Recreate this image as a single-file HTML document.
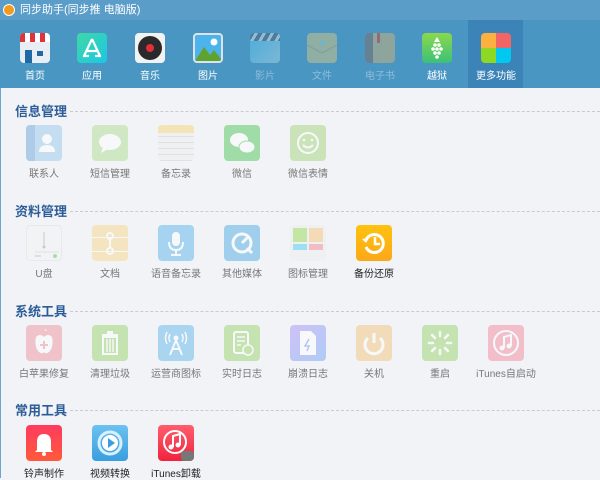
<!DOCTYPE html>
<html><head><meta charset="utf-8"><style>
*{margin:0;padding:0;box-sizing:border-box}
body{width:600px;height:478px;overflow:hidden;background:#f1f3f7;font-family:"Liberation Sans","Noto Sans CJK SC",sans-serif;position:relative}
.a{position:absolute}
#title{left:0;top:0;width:600px;height:20px;background:#5a9dc9;color:#fff;font-size:11px;line-height:20px;padding-left:20px}
#tb{left:0;top:20px;width:600px;height:68px;background:#4996c3}
#sel{left:468px;top:20px;width:55px;height:68px;background:#3c84b7}
.ti{position:absolute;top:33px;width:30px;height:30px;border-radius:4px;overflow:hidden}
.tl{position:absolute;top:67px;width:60px;text-align:center;font-size:10px;color:#fff}
.dim{color:#8fbcdc}
#lb{left:0;top:88px;width:1px;height:390px;background:#6aa6d3}
.h{position:absolute;left:15px;font-size:13px;font-weight:bold;color:#2d5d98}
.dl{position:absolute;left:70px;width:530px;border-top:1px dashed #c8ccd2}
.ic{position:absolute;width:36px;height:36px;border-radius:4px;overflow:hidden}
.f{opacity:.45}
.lab{position:absolute;width:70px;text-align:center;font-size:10px;color:#777}
.lab.on{color:#222}
</style></head><body>
<div id="title" class="a">同步助手(同步推 电脑版)</div>
<div class="a" style="left:3px;top:4px;width:12px;height:12px;border-radius:6px;background:#f39a1e;border:1px solid #fff"></div>
<div id="tb" class="a"></div>
<div id="sel" class="a"></div>

<div class="ti" style="left:20px;background:#e8eef4"><div class="a" style="left:0;top:0;width:30px;height:9px;background:repeating-linear-gradient(90deg,#e0323c 0 5px,#fff 5px 10px)"></div><div class="a" style="left:5px;top:17px;width:7px;height:13px;background:#1f6aa5"></div><div class="a" style="left:17px;top:18px;width:6px;height:5px;background:#1f6aa5"></div></div>
<div class="ti" style="left:77px;background:linear-gradient(135deg,#3fd8a6,#1cc6e6)"><svg width="30" height="30"><path d="M15 6L7 23M15 6L23 23M9 18H21M6 23H12M18 23H24" stroke="#fff" stroke-width="2.2" fill="none"/></svg></div>
<div class="ti" style="left:135px;background:#f2f2f2"><div class="a" style="left:3px;top:3px;width:24px;height:24px;border-radius:12px;background:#2a2a2a"></div><div class="a" style="left:11px;top:11px;width:8px;height:8px;border-radius:4px;background:#e0303c"></div></div>
<div class="ti" style="left:193px;background:#eef2f5;border:2px solid #dde3e8"><div class="a" style="left:0;top:0;width:26px;height:26px;background:#4cb4ea"></div><svg class="a" style="left:0;top:0" width="26" height="26"><path d="M0 26L9 12L15 20L19 15L26 24V26Z" fill="#5fa22e"/><circle cx="19" cy="7" r="3.5" fill="#fff"/></svg></div>
<div class="ti" style="left:250px;background:linear-gradient(135deg,#4fc0ea,#a6d2e6);opacity:.55"><div class="a" style="left:0;top:0;width:30px;height:8px;background:repeating-linear-gradient(120deg,#567 0 4px,#cde 4px 7px)"></div></div>
<div class="ti" style="left:307px;background:#a7b69a;opacity:.75"><svg width="30" height="30"><path d="M0 12L15 20L30 12" stroke="#94a38a" fill="none"/><circle cx="15" cy="10" r="2" fill="#6ec1e4"/></svg></div>
<div class="ti" style="left:365px;background:#a4a98f;opacity:.75"><div class="a" style="left:0;top:0;width:8px;height:30px;background:#6f7b84"></div><div class="a" style="left:12px;top:0;width:3px;height:10px;background:#b05a5a"></div></div>
<div class="ti" style="left:422px;background:linear-gradient(#8ad84c,#3cc07a)"><svg width="30" height="30"><g fill="#fff"><circle cx="15" cy="16" r="1.8"/><circle cx="11" cy="16" r="1.8"/><circle cx="19" cy="16" r="1.8"/><circle cx="13" cy="20" r="1.8"/><circle cx="17" cy="20" r="1.8"/><circle cx="13" cy="12" r="1.8"/><circle cx="17" cy="12" r="1.8"/><circle cx="15" cy="24" r="1.8"/><path d="M15 4L12 9H18Z"/></g></svg></div>
<div class="ti" style="left:481px"><div class="a" style="left:0;top:0;width:15px;height:15px;background:#fbb040"></div><div class="a" style="left:15px;top:0;width:15px;height:15px;background:#f06565"></div><div class="a" style="left:0;top:15px;width:15px;height:15px;background:#8ed722"></div><div class="a" style="left:15px;top:15px;width:15px;height:15px;background:#00c8f0"></div></div>
<div class="tl" style="left:5px">首页</div><div class="tl" style="left:62px">应用</div><div class="tl" style="left:120px">音乐</div><div class="tl" style="left:178px">图片</div><div class="tl dim" style="left:235px">影片</div><div class="tl dim" style="left:292px">文件</div><div class="tl dim" style="left:350px">电子书</div><div class="tl" style="left:407px">越狱</div><div class="tl" style="left:466px">更多功能</div>

<div id="lb" class="a"></div>

<div class="h" style="top:101px">信息管理</div><div class="dl" style="top:111px"></div>
<div class="h" style="top:201px">资料管理</div><div class="dl" style="top:211px"></div>
<div class="h" style="top:301px">系统工具</div><div class="dl" style="top:311px"></div>
<div class="h" style="top:400px">常用工具</div><div class="dl" style="top:410px"></div>

<div class="ic f" style="left:26px;top:125px;background:#8ec3ea"><div class="a" style="left:0;top:0;width:9px;height:36px;background:#5e9fd8"></div><svg class="a" width="36" height="36"><circle cx="21" cy="14" r="5" fill="#fff"/><path d="M13 27Q13 20 21 20Q29 20 29 27Z" fill="#fff"/></svg></div>
<div class="ic f" style="left:92px;top:125px;background:#a8dc86"><svg width="36" height="36"><ellipse cx="18" cy="17" rx="11" ry="8" fill="#fff"/><path d="M11 22L9 28L16 24Z" fill="#fff"/></svg></div>
<div class="ic f" style="left:158px;top:125px;background:repeating-linear-gradient(#eee 0 5px,#ccc 5px 6px)"><div class="a" style="left:0;top:0;width:36px;height:8px;background:#f4d466"></div></div>
<div class="ic f" style="left:224px;top:125px;background:#3fc248"><svg width="36" height="36"><ellipse cx="15" cy="15" rx="9" ry="7" fill="#fff"/><ellipse cx="23" cy="22" rx="8" ry="6" fill="#fff" stroke="#3fc248"/></svg></div>
<div class="ic f" style="left:290px;top:125px;background:#9ed16d"><svg width="36" height="36"><circle cx="18" cy="18" r="10" fill="none" stroke="#fff" stroke-width="2"/><path d="M13 20Q18 25 23 20" stroke="#fff" stroke-width="2" fill="none"/><circle cx="14" cy="15" r="1.3" fill="#fff"/><circle cx="22" cy="15" r="1.3" fill="#fff"/></svg></div>
<div class="lab" style="left:9px;top:165px">联系人</div><div class="lab" style="left:75px;top:165px">短信管理</div><div class="lab" style="left:141px;top:165px">备忘录</div><div class="lab" style="left:207px;top:165px">微信</div><div class="lab" style="left:273px;top:165px">微信表情</div>

<div class="ic f" style="left:26px;top:225px;background:#f4f4f4;border:1px solid #ddd"><svg width="34" height="34"><path d="M17 6V20" stroke="#999"/><circle cx="17" cy="21" r="1.5" fill="#999"/><path d="M8 26H32" stroke="#ccc"/><path d="M8 30H14" stroke="#999"/><circle cx="28" cy="30" r="2" fill="#4c4"/></svg></div>
<div class="ic f" style="left:92px;top:225px;background:#f8d27c"><div class="a" style="left:0;top:12px;width:36px;height:1px;background:#fff"></div><div class="a" style="left:0;top:26px;width:36px;height:1px;background:#fff"></div><svg class="a" width="36" height="36"><circle cx="18" cy="11" r="3" fill="none" stroke="#fff" stroke-width="2"/><circle cx="18" cy="26" r="3" fill="none" stroke="#fff" stroke-width="2"/><path d="M18 14V23" stroke="#fff" stroke-width="2"/></svg></div>
<div class="ic f" style="left:158px;top:225px;background:#4cb0e8"><svg width="36" height="36"><rect x="14" y="7" width="8" height="14" rx="4" fill="#fff"/><path d="M11 17Q11 25 18 25Q25 25 25 17M18 25V30M13 30H23" stroke="#fff" stroke-width="2" fill="none"/></svg></div>
<div class="ic f" style="left:224px;top:225px;background:#3da4e0"><svg width="36" height="36"><circle cx="18" cy="18" r="9" fill="none" stroke="#fff" stroke-width="3"/><path d="M18 18L24 12M23 23L28 28" stroke="#fff" stroke-width="3"/></svg></div>
<div class="ic f" style="left:290px;top:225px;background:#eee"><div class="a" style="left:3px;top:3px;width:14px;height:14px;background:#8ed740"></div><div class="a" style="left:19px;top:3px;width:14px;height:14px;background:#f8c06a"></div><div class="a" style="left:3px;top:19px;width:14px;height:6px;background:#3ac8ef"></div><div class="a" style="left:19px;top:19px;width:14px;height:6px;background:#f47a8a"></div></div>
<div class="ic" style="left:356px;top:225px;background:linear-gradient(#ffc20f,#fba818)"><svg width="36" height="36"><path d="M10 15A9 9 0 1 1 10 22" stroke="#fff" stroke-width="3" fill="none"/><path d="M6 14L10 18L13 13Z" fill="#fff"/><path d="M19 12V19H24" stroke="#fff" stroke-width="2.5" fill="none"/></svg></div>
<div class="lab" style="left:9px;top:265px">U盘</div><div class="lab" style="left:75px;top:265px">文档</div><div class="lab" style="left:141px;top:265px">语音备忘录</div><div class="lab" style="left:207px;top:265px">其他媒体</div><div class="lab" style="left:273px;top:265px">图标管理</div><div class="lab on" style="left:339px;top:265px">备份还原</div>

<div class="ic f" style="left:26px;top:325px;background:#f08a95"><svg width="36" height="36"><path d="M18 12Q22 8 26 12Q28 20 24 26Q20 30 18 27Q16 30 12 26Q8 20 10 12Q14 8 18 12Z" fill="#fff"/><path d="M18 5Q20 3 21 6Z" fill="#fff"/><path d="M18 16V24M14 20H22" stroke="#f08a95" stroke-width="2"/></svg></div>
<div class="ic f" style="left:92px;top:325px;background:#8fd05c"><svg width="36" height="36"><rect x="10" y="9" width="16" height="2" fill="#fff"/><rect x="15" y="6" width="6" height="3" fill="#fff"/><rect x="11" y="12" width="14" height="17" fill="none" stroke="#fff" stroke-width="2"/><path d="M15 14V27M18 14V27M21 14V27" stroke="#fff" stroke-width="1.5"/></svg></div>
<div class="ic f" style="left:158px;top:325px;background:#55b2ea"><svg width="36" height="36"><circle cx="18" cy="13" r="2.5" fill="#fff"/><path d="M18 15L12 30M18 15L24 30M14 24H22" stroke="#fff" stroke-width="2"/><path d="M12 9Q10 13 12 17M24 9Q26 13 24 17M9 7Q6 13 9 19M27 7Q30 13 27 19" stroke="#fff" stroke-width="1.5" fill="none"/></svg></div>
<div class="ic f" style="left:224px;top:325px;background:#8fd05c"><svg width="36" height="36"><rect x="10" y="7" width="14" height="21" rx="2" fill="none" stroke="#fff" stroke-width="2"/><path d="M13 12H21M13 16H21M13 20H17" stroke="#fff" stroke-width="1.5"/><circle cx="24" cy="25" r="5" fill="#8fd05c" stroke="#fff" stroke-width="1.5"/></svg></div>
<div class="ic f" style="left:290px;top:325px;background:linear-gradient(135deg,#a586f6,#5f9ef6)"><svg width="36" height="36"><path d="M10 6H21L26 11V30H10Z" fill="#fff"/><path d="M19 14L15 21H19L17 26" stroke="#6c8ef0" stroke-width="1.5" fill="none"/></svg></div>
<div class="ic f" style="left:356px;top:325px;background:#f5c070"><svg width="36" height="36"><path d="M12 13A9 9 0 1 0 24 13" stroke="#fff" stroke-width="3" fill="none"/><path d="M18 8V18" stroke="#fff" stroke-width="3"/></svg></div>
<div class="ic f" style="left:422px;top:325px;background:#8fd05c"><svg width="36" height="36"><g stroke="#fff" stroke-width="2.5" stroke-linecap="round"><path d="M18 7V11M18 25V29M7 18H11M25 18H29M10 10L13 13M23 23L26 26M26 10L23 13M13 23L10 26"/></g></svg></div>
<div class="ic f" style="left:488px;top:325px;background:#f58095"><svg width="36" height="36"><circle cx="18" cy="18" r="12" fill="none" stroke="#fff" stroke-width="2"/><path d="M16 23V12L23 10V21" stroke="#fff" stroke-width="2" fill="none"/><circle cx="14" cy="23" r="2.5" fill="#fff"/><circle cx="21" cy="21" r="2.5" fill="#fff"/></svg></div>
<div class="lab" style="left:9px;top:365px">白苹果修复</div><div class="lab" style="left:75px;top:365px">清理垃圾</div><div class="lab" style="left:141px;top:365px">运营商图标</div><div class="lab" style="left:207px;top:365px">实时日志</div><div class="lab" style="left:273px;top:365px">崩溃日志</div><div class="lab" style="left:339px;top:365px">关机</div><div class="lab" style="left:405px;top:365px">重启</div><div class="lab" style="left:469px;top:365px;width:74px">iTunes自启动</div>

<div class="ic" style="left:26px;top:425px;background:linear-gradient(#ff3b5f,#ff5a3c)"><svg width="36" height="36"><path d="M11 25V17Q11 9 18 9Q25 9 25 17V25L27 27H9Z" fill="#fff"/><circle cx="18" cy="29" r="2" fill="#fff"/></svg></div>
<div class="ic" style="left:92px;top:425px;background:linear-gradient(#6cc2f0,#3a9ee0)"><svg width="36" height="36"><circle cx="18" cy="18" r="11" fill="none" stroke="#d8f0ff" stroke-width="3"/><circle cx="18" cy="18" r="8" fill="#fff"/><path d="M16 13L23 18L16 23Z" fill="#3a9ee0"/></svg></div>
<div class="ic" style="left:158px;top:425px;background:linear-gradient(#ff5e6c,#f0233e)"><svg width="36" height="36"><circle cx="17" cy="17" r="11" fill="none" stroke="#fff" stroke-width="2"/><path d="M15 22V11L22 9V20" stroke="#fff" stroke-width="2" fill="none"/><circle cx="13" cy="22" r="2.5" fill="#fff"/><circle cx="20" cy="20" r="2.5" fill="#fff"/><rect x="23" y="26" width="13" height="10" rx="3" fill="#777"/></svg></div>
<div class="lab on" style="left:9px;top:465px">铃声制作</div><div class="lab on" style="left:75px;top:465px">视频转换</div><div class="lab on" style="left:141px;top:465px">iTunes卸载</div>
</body></html>
